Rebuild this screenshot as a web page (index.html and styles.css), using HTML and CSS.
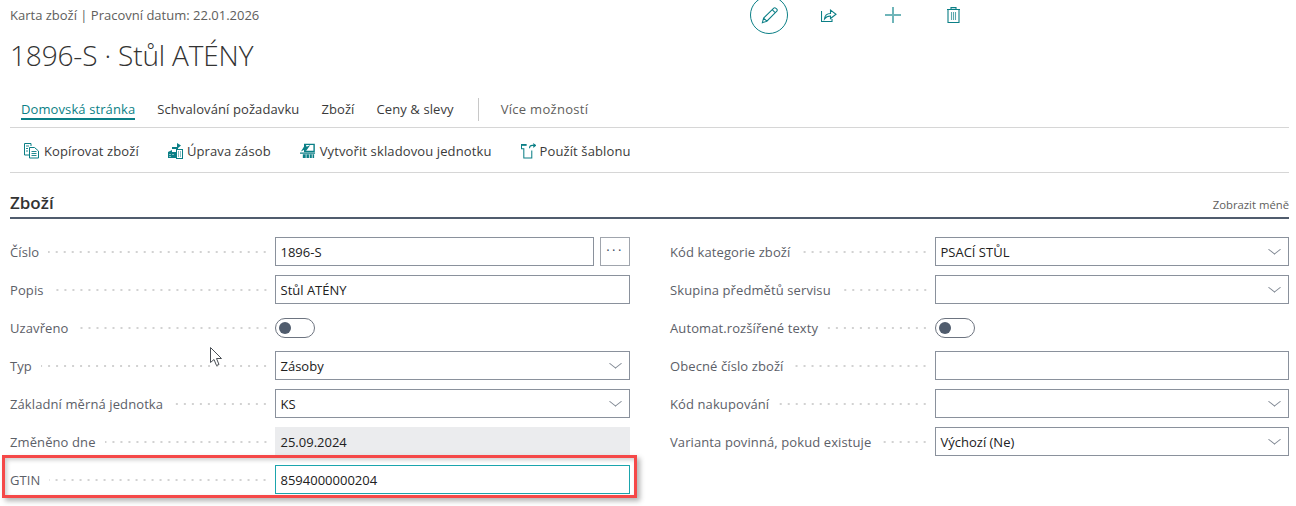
FILE: index.html
```html
<!DOCTYPE html>
<html lang="cs">
<head>
<meta charset="utf-8">
<title>1896-S · Stůl ATÉNY</title>
<link rel="stylesheet" href="styles.css">
</head>
<body>
<div class="page">
  <header class="head">
    <div class="head-text">
      <div class="crumb">Karta zboží | Pracovní datum: 22.01.2026</div>
      <h1 class="title">1896-S · Stůl ATÉNY</h1>
    </div>
    <div class="head-actions">
      <span class="circle"><svg width="19" height="19" viewBox="0 0 20 20" fill="none" stroke="#0b7f86" stroke-width="1.1"><path d="M2.500 17.500l1.300-4.800L14.500 2.200c.6-.6 1.500-.6 2 0l1.200 1.200c.6.6.6 1.400 0 2L7.200 16zM3.800 12.700l3.400 3.300M12.800 3.900l3.400 3.300"/></svg></span>
      <span class="hicon share"><svg width="16" height="14" viewBox="0 0 16 14" fill="none" stroke="#0b7f86" stroke-width="1.100"><path d="M.5 3v10.500h10.500v-2.500"/><path d="M3.500 11c.3-3.500 2.500-5.500 6-5.500V2l5.500 4.200-5.500 4.300V8c-2.500 0-4.500.8-6 3z"/></svg></span>
      <span class="hicon plus"><svg width="16" height="16" viewBox="0 0 16 16" fill="none" stroke="#6fb5b9" stroke-width="2"><path d="M8 0v16M0 8h16"/></svg></span>
      <span class="hicon trash"><svg width="13" height="16" viewBox="0 0 13 16" fill="none" stroke="#0b7f86" stroke-width="1.100"><path d="M0 2.500h13M1 2.500v13h11v-13M4 2.500V.6h5v1.900"/><path d="M4.500 5v8M6.500 5v8M8.500 5v8" stroke="#5aa8ad"/></svg></span>
    </div>
  </header>

  <nav class="tabs">
    <a class="tab active">Domovská stránka</a>
    <a class="tab">Schvalování požadavku</a>
    <a class="tab">Zboží</a>
    <a class="tab">Ceny &amp; slevy</a>
    <span class="tab-sep"></span>
    <a class="tab more">Více možností</a>
  </nav>

  <div class="actions">
    <span class="action"><svg width="16" height="16" viewBox="0 0 16 16" fill="none" stroke="#0b7f86"><path d="M7 3V.5H.5V12H5"/><path d="M5.500 4.500h5l4 3.500v7h-9z"/><path d="M2 3h3M2 5.500h2M2 8h2M7.500 8.500h5M7.500 10.500h5M7.500 12.500h5" stroke-width=".9"/></svg>Kopírovat zboží</span>
    <span class="action"><svg width="15" height="16" viewBox="0 0 15 16"><path d="M0 9l4-2v2h4v6H0zM4 4h5V0l4 2.500L10 5v1H4z" fill="#0b7f86"/><rect x="8.500" y="6.500" width="6" height="9" fill="#fff" stroke="#0b7f86"/><path d="M10 9h1M12 9h1M10 11h1M12 11h1M10 13h1M12 13h1" stroke="#0b7f86"/><path d="M2 11v1M2 13v1M5 11v1" stroke="#fff"/></svg>Úprava zásob</span>
    <span class="action"><svg width="16" height="16" viewBox="0 0 17 17"><path d="M5 1.500h10v7.500H5z" fill="none" stroke="#0b7f86" stroke-width="1.500"/><path d="M1 9l5-8 1 3 4-2-5 7-1-2z" fill="#0b7f86"/><path d="M0 10h16v1.500H0zM3 12h12v4H3z" fill="#0b7f86"/><path d="M6.500 12v4M10 12v4M13 12v4" stroke="#fff" stroke-width=".8"/></svg>Vytvořit skladovou jednotku</span>
    <span class="action"><svg width="15" height="16" viewBox="0 0 16 16" fill="none" stroke="#0b7f86" stroke-width="1.100"><path d="M.5 1.500v4h2.500v10h8.500v-8"/><path d="M0 1.500h6" stroke-width="2"/><path d="M9 5c.2-2 1.500-3 3-3h3M13 .2l2.500 1.800L13 4"/></svg>Použít šablonu</span>
  </div>

  <section class="section">
    <div class="section-head">
      <h2 class="section-title">Zboží</h2>
      <span class="section-link">Zobrazit méně</span>
    </div>
    <div class="form">
      <div class="col">
        <div class="row"><span class="label">Číslo</span><span class="dots"></span>
          <div class="control split"><span class="input grow">1896-S</span><span class="more-btn">···</span></div></div>
        <div class="row"><span class="label">Popis</span><span class="dots"></span>
          <div class="control"><span class="input">Stůl ATÉNY</span></div></div>
        <div class="row"><span class="label">Uzavřeno</span><span class="dots"></span>
          <div class="control"><span class="toggle"><i></i></span></div></div>
        <div class="row"><span class="label">Typ</span><span class="dots"></span>
          <div class="control"><span class="input select">Zásoby</span></div></div>
        <div class="row"><span class="label">Základní měrná jednotka</span><span class="dots"></span>
          <div class="control"><span class="input select">KS</span></div></div>
        <div class="row"><span class="label">Změněno dne</span><span class="dots"></span>
          <div class="control"><span class="input readonly">25.09.2024</span></div></div>
        <div class="row"><span class="label">GTIN</span><span class="dots"></span>
          <div class="control"><span class="input focused">8594000000204</span></div></div>
      </div>
      <div class="col">
        <div class="row"><span class="label">Kód kategorie zboží</span><span class="dots"></span>
          <div class="control"><span class="input select">PSACÍ STŮL</span></div></div>
        <div class="row"><span class="label">Skupina předmětů servisu</span><span class="dots"></span>
          <div class="control"><span class="input select"></span></div></div>
        <div class="row"><span class="label">Automat.rozšířené texty</span><span class="dots"></span>
          <div class="control"><span class="toggle"><i></i></span></div></div>
        <div class="row"><span class="label">Obecné číslo zboží</span><span class="dots"></span>
          <div class="control"><span class="input"></span></div></div>
        <div class="row"><span class="label">Kód nakupování</span><span class="dots"></span>
          <div class="control"><span class="input select"></span></div></div>
        <div class="row"><span class="label">Varianta povinná, pokud existuje</span><span class="dots"></span>
          <div class="control"><span class="input select">Výchozí (Ne)</span></div></div>
      </div>
    </div>
  </section>

  <div class="highlight"></div>
  <svg class="cursor" width="13" height="20" viewBox="0 0 13 20"><path d="M.5.5v15l3.500-3 2.500 6 2.500-1-2.500-6h5z" fill="#fff" stroke="#4a4f55"/></svg>
</div>
</body>
</html>
```
FILE: styles.css
```css
* { box-sizing: border-box; }
html, body { margin: 0; padding: 0; background: #fff; }
body {
  font-family: "Open Sans", "Noto Sans", sans-serif;
  font-size: 13px;
  color: #212121;
  overflow: hidden;
}
.page { position: relative; width: 1296px; height: 506px; overflow: hidden; }

.head { display: flex; height: 98px; padding-left: 10px; }
.head-text { width: 740px; flex: none; padding-top: 6px; }
.crumb { font-size: 13px; line-height: 18px; color: #605e5c; }
.title { margin: 12px 0 0; font-size: 28px; font-weight: 300; line-height: 38px; color: #333; letter-spacing: -.15px; }
.head-actions { display: flex; align-items: flex-start; margin-top: -4px; }
.circle {
  width: 38px; height: 38px; border: 1px solid #0b7f86; border-radius: 50%;
  display: flex; align-items: center; justify-content: center;
}
.hicon { display: flex; }
.share { margin: 12px 0 0 33px; }
.plus { margin: 11px 0 0 48px; }
.trash { margin: 11px 0 0 46px; }

.tabs { display: flex; align-items: flex-start; height: 30px; margin: 0 7px 0 10px; border-bottom: 1px solid #d6d6d6; }
.tab { margin-left: 11px; margin-right: 11px; height: 22px; padding-top: 3px; line-height: 17px; color: #3a3a3a; white-space: nowrap; letter-spacing: .1px; }
.tab.active { color: #0b7f86; border-bottom: 2px solid #0b7f86; }
.tab-sep { width: 1px; height: 23px; background: #c8c8c8; margin: 0 11px 0 13px; }
.tab.more { color: #605e5c; margin-left: 11px; letter-spacing: .3px; }

.actions { display: flex; align-items: center; height: 45px; margin: 0 7px 0 10px; padding: 1px 0 0 14px; border-bottom: 1px solid #d6d6d6; }
.action { display: flex; align-items: center; gap: 4px; margin-right: 29px; color: #3a3a3a; white-space: nowrap; letter-spacing: .12px; }

.section { margin: 0 7px 0 10px; }
.section-head { display: flex; justify-content: space-between; align-items: flex-end; height: 46px; border-bottom: 2px solid #505c6d; padding-bottom: 3px; }
.section-title { margin: 0; font-size: 17px; font-weight: 600; line-height: 22px; color: #333; }
.section-link { font-size: 11.3px; line-height: 18px; color: #605e5c; }

.form { display: grid; grid-template-columns: 620px 619px; column-gap: 40px; padding-top: 18px; }
.col { display: flex; flex-direction: column; gap: 9px; }
.row { display: flex; align-items: center; height: 29px; }
.label { color: #5c6068; white-space: nowrap; letter-spacing: .1px; }
.dots {
  flex: 1; height: 2px; margin: 1px 6px 0 9px;
  background-image: radial-gradient(circle, #d2d2d2 .8px, transparent 1px);
  background-size: 8px 2px; background-position: right;
}
.control { flex: none; width: 355px; display: flex; align-items: center; }
.col:last-child .control { width: 354px; }
.split { gap: 6px; }
.input {
  position: relative; display: block; width: 100%; height: 29px; padding: 0 4.5px;
  border: 1px solid #8a919c; line-height: 28px; color: #212121; white-space: nowrap;
}
.grow { flex: 1; width: auto; }
.more-btn {
  flex: none; width: 30px; height: 29px; border: 1px solid #a0a5ad;
  text-align: center; line-height: 25px; color: #3c4a60; letter-spacing: 2.5px;
}
.select::after {
  content: ""; position: absolute; right: 9px; top: 7px; width: 8px; height: 8px;
  border-right: 1px solid #7a828e; border-bottom: 1px solid #7a828e;
  transform: scaleY(.8) rotate(45deg);
}
.readonly { background: #ebecee; border-color: #ebecee; }
.focused { border-color: #1ba5ad; }
.toggle {
  display: flex; align-items: center; width: 40px; height: 20px; padding-left: 3px;
  border: 1px solid #6d7480; border-radius: 10px;
}
.toggle i { display: block; width: 12px; height: 12px; border-radius: 50%; background: #505c6d; }

.highlight {
  position: absolute; left: 2px; top: 455px; width: 635px; height: 43px;
  border: 3px solid #f54848;
  box-shadow: 3px 3px 5px rgba(0,0,0,.3), inset 2px 2px 4px rgba(0,0,0,.2);
}
.cursor { position: absolute; left: 210px; top: 347px; }
```
